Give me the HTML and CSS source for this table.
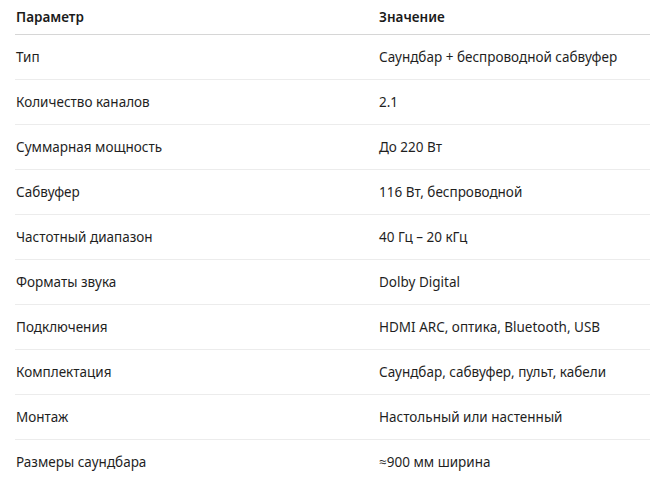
FILE: index.html
```html
<!DOCTYPE html>
<html lang="ru">
<head>
<meta charset="utf-8">
<link rel="stylesheet" href="styles.css">
</head>
<body>
<table class="spec">
  <thead>
    <tr><th>Параметр</th><th>Значение</th></tr>
  </thead>
  <tbody>
    <tr><td>Тип</td><td>Саундбар + беспроводной сабвуфер</td></tr>
    <tr><td>Количество каналов</td><td>2.1</td></tr>
    <tr><td>Суммарная мощность</td><td>До 220 Вт</td></tr>
    <tr><td>Сабвуфер</td><td>116 Вт, беспроводной</td></tr>
    <tr><td>Частотный диапазон</td><td>40 Гц – 20 кГц</td></tr>
    <tr><td>Форматы звука</td><td>Dolby Digital</td></tr>
    <tr><td>Подключения</td><td>HDMI ARC, оптика, Bluetooth, USB</td></tr>
    <tr><td>Комплектация</td><td>Саундбар, сабвуфер, пульт, кабели</td></tr>
    <tr><td>Монтаж</td><td>Настольный или настенный</td></tr>
    <tr><td>Размеры саундбара</td><td>≈900 мм ширина</td></tr>
  </tbody>
</table>
</body>
</html>
```

FILE: styles.css
```css
html, body {
  margin: 0;
  padding: 0;
  background: #ffffff;
}
body {
  font-family: "Noto Sans", "Open Sans", sans-serif;
  font-size: 13.5px;
  color: #1f1f1f;
  padding-left: 15px;
}
.spec {
  border-collapse: collapse;
  width: 635px;
  table-layout: fixed;
}
.spec th, .spec td {
  text-align: left;
  padding: 0 0 0 1px;
  vertical-align: middle;
}
.spec th:first-child, .spec td:first-child {
  width: 362px;
}
.spec th {
  font-weight: 600;
  color: #1a1a1a;
  height: 34px;
  border-bottom: 1px solid #d6d6d6;
}
.spec td {
  height: 44px;
  border-bottom: 1px solid #ececec;
}
.spec tbody tr:last-child td {
  border-bottom: none;
}
```
